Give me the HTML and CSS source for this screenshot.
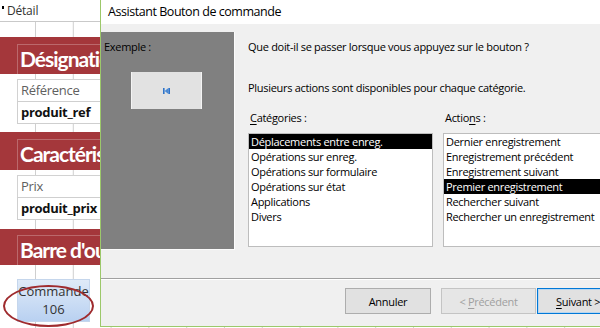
FILE: index.html
```html
<!DOCTYPE html>
<html lang="fr">
<head>
<meta charset="utf-8">
<link rel="stylesheet" href="styles.css">
</head>
<body>
<div class="form">
  <div class="sec-head"><span class="mark"></span>Détail</div>
  <div class="band band-1"><div class="band-label">Désignation</div></div>
  <div class="field-label fl-1">Référence</div>
  <div class="field-value">produit_ref</div>
  <div class="band band-2"><div class="band-label">Caractéristiques</div></div>
  <div class="field-label fl-2">Prix</div>
  <div class="field-value">produit_prix</div>
  <div class="band band-3"><div class="band-label">Barre d'outils</div></div>
  <div class="cmd-btn">Commande<br>106</div>
  <div class="ellipse"></div>
</div>

<div class="dialog">
  <div class="title">Assistant Bouton de commande</div>
  <div class="body">
    <div class="top">
      <div class="example">
        <div class="ex-label">Exemple :</div>
        <div class="ex-btn">
          <svg width="7" height="6" viewBox="0 0 7 6"><rect x="0" y="0" width="1.6" height="6" fill="#2f74c9"/><polygon points="1.6,3 5.4,0 5.4,6" fill="#4a8ad6"/><rect x="5.4" y="0" width="1.6" height="6" fill="#2f74c9"/></svg>
        </div>
      </div>
      <div class="content">
        <p class="q">Que doit-il se passer lorsque vous appuyez sur le bouton ?</p>
        <p class="info">Plusieurs actions sont disponibles pour chaque catégorie.</p>
        <div class="lists">
          <div class="col col-cat">
            <div class="list-label"><u>C</u>atégories :</div>
            <ul class="listbox">
              <li class="sel">Déplacements entre enreg.</li>
              <li>Opérations sur enreg.</li>
              <li>Opérations sur formulaire</li>
              <li>Opérations sur état</li>
              <li>Applications</li>
              <li>Divers</li>
            </ul>
          </div>
          <div class="col col-act">
            <div class="list-label">Actio<u>n</u>s :</div>
            <ul class="listbox">
              <li>Dernier enregistrement</li>
              <li>Enregistrement précédent</li>
              <li>Enregistrement suivant</li>
              <li class="sel">Premier enregistrement</li>
              <li>Rechercher suivant</li>
              <li>Rechercher un enregistrement</li>
            </ul>
          </div>
        </div>
      </div>
    </div>
    <div class="sep"></div>
    <div class="buttons">
      <button class="btn btn-cancel">Annuler</button>
      <button class="btn btn-prev" disabled>&lt; <u>P</u>récédent</button>
      <button class="btn btn-next"><u>S</u>uivant &gt;</button>
    </div>
  </div>
</div>
</body>
</html>
```

FILE: styles.css
```css
* { box-sizing: border-box; }
html, body { margin: 0; padding: 0; }
body {
  width: 600px;
  height: 328px;
  overflow: hidden;
  position: relative;
  font-family: "Open Sans", "Noto Sans", sans-serif;
  background: #fff;
}

/* ---------- Access form (background) ---------- */
.form {
  width: 600px;
  height: 328px;
  background-color: #fff;
  background-image: linear-gradient(to right, #cfcfcf 1px, transparent 1px);
  background-size: 37.8px 100%;
  background-position: 35px 0;
}
.form > div:not(.ellipse) { max-width: 100px; overflow: hidden; }
.sec-head {
  height: 22px;
  border-bottom: 1px solid #c9c9c9;
  background: #fff;
  font-size: 12px;
  color: #333;
  line-height: 22px;
  padding-left: 7px;
  position: relative;
  letter-spacing: -0.2px;
}
.mark {
  position: absolute;
  left: 2px;
  top: 6px;
  width: 2px;
  height: 3px;
  background: #000;
}
.band {
  background: #a4373b;
  height: 37px;
  padding-left: 17px;
  padding-top: 7px;
}
.band-1 { margin-top: 15px; }
.band-2 { margin-top: 8px; height: 38px; }
.band-3 { margin-top: 9px; height: 36px; padding-top: 6px; }
.band-label {
  width: 83px;
  height: 100%;
  overflow: hidden;
  border-left: 1px solid rgba(255,255,255,0.25);
  border-top: 1px solid rgba(255,255,255,0.25);
  color: #fff;
  font-family: Lato, "Open Sans", sans-serif;
  font-weight: bold;
  font-size: 21px;
  letter-spacing: -1px;
  line-height: 28px;
  padding-left: 2px;
  white-space: nowrap;
}
.field-label {
  margin-left: 17px;
  width: 83px;
  height: 22px;
  border: 1px solid #d2d2d2;
  border-right: none;
  border-bottom: none;
  font-size: 13px;
  letter-spacing: -0.3px;
  color: #5f5f5f;
  line-height: 20px;
  padding-left: 3px;
  background: #fff;
  white-space: nowrap;
}
.fl-1 { margin-top: 5px; }
.fl-2 { margin-top: 5px; }
.field-value {
  margin-left: 17px;
  width: 83px;
  height: 23px;
  border: 1px solid #cfcfcf;
  border-right: none;
  font-size: 13px;
  letter-spacing: -0.3px;
  font-weight: bold;
  color: #111;
  line-height: 21px;
  padding-left: 3px;
  background: #fff;
  white-space: nowrap;
}
.cmd-btn {
  margin-top: 14px;
  margin-left: 17px;
  width: 73px;
  height: 43px;
  background: linear-gradient(#dfeaf8, #b9d1f1);
  border: 1px solid #c5d6ec;
  font-size: 13px;
  color: #333;
  text-align: center;
  line-height: 18px;
  padding-top: 2px;
}
.ellipse {
  position: absolute;
  left: 3px;
  top: 285px;
  width: 91px;
  height: 42px;
  border: 2px solid #9f2b2e;
  border-radius: 50%;
}

/* ---------- Dialog ---------- */
.dialog {
  position: absolute;
  left: 100px;
  top: 0;
  width: 500px;
  height: 327px;
  overflow: hidden;
  border-left: 1px solid #9cc86a;
  border-bottom: 1px solid #9cc86a;
  background: #f0f0f0;
  font-size: 11px;
  letter-spacing: -0.3px;
  color: #000;
}
.title {
  height: 24px;
  background: #fff;
  font-size: 12.5px;
  letter-spacing: -0.45px;
  line-height: 24px;
  padding-left: 7px;
  color: #000;
}
.top {
  display: flex;
  padding-top: 8px;
}
.example {
  flex: 0 0 134px;
  width: 134px;
  height: 218px;
  background: #808080;
  border-right: 1px solid #fbfbfb;
  border-bottom: 1px solid #fbfbfb;
  padding-top: 7px;
  padding-left: 3px;
}
.ex-label {
  font-size: 11px;
  line-height: 16px;
  color: #000;
  text-align: left;
}
.ex-btn {
  margin-top: 17px;
  margin-left: 27px;
  width: 71px;
  height: 37px;
  background: #e2e2e2;
  border-left: 1px solid #f4f4f4;
  border-right: 1px solid #f4f4f4;
  display: flex;
  align-items: center;
  justify-content: center;
}
.content {
  padding-left: 13px;
  padding-top: 7px;
  flex: 1 1 auto;
  min-width: 0;
}
.content p {
  margin: 0;
  line-height: 16px;
  white-space: nowrap;
}
.content p.info { margin-top: 25px; }
.lists {
  display: flex;
  gap: 10px;
  margin-top: 14px;
}
.col-cat { flex: 0 0 185px; }
.col-act { flex: 0 0 200px; }
.list-label {
  line-height: 16px;
  padding-left: 2px;
  height: 16px;
  margin-bottom: 7px;
}
.list-label u, .btn u { text-decoration-thickness: 1px; text-underline-offset: 2px; }
.listbox {
  list-style: none;
  margin: 0;
  padding: 0;
  height: 114px;
  background: #fff;
  border: 1px solid #bdbdbd;
}
.listbox li {
  height: 15px;
  line-height: 15px;
  padding-left: 2px;
  white-space: nowrap;
}
.listbox li.sel {
  background: #000;
  color: #fff;
}
.sep {
  margin-top: 28px;
  height: 2px;
  border-top: 1px solid #a0a0a0;
  border-bottom: 1px solid #fff;
}
.buttons {
  display: flex;
  padding-left: 244px;
  margin-top: 8px;
}
.btn {
  flex: 0 0 auto;
  font-family: inherit;
  font-size: 11px;
  letter-spacing: -0.3px;
  height: 26px;
  width: 86px;
  background: #e1e1e1;
  border: 1px solid #adadad;
  color: #000;
  padding: 0;
}
.btn-prev {
  margin-left: 10px;
  width: 95px;
  color: #a0a0a0;
  border-color: #c4c4c4;
  background: #e6e6e6;
}
.btn-next {
  margin-left: 1px;
  width: 95px;
  text-align: left;
  padding-left: 18px;
  white-space: nowrap;
  border: 1px solid #0078d7;
  box-shadow: inset 0 0 0 1px #b8d6f0;
}
```
